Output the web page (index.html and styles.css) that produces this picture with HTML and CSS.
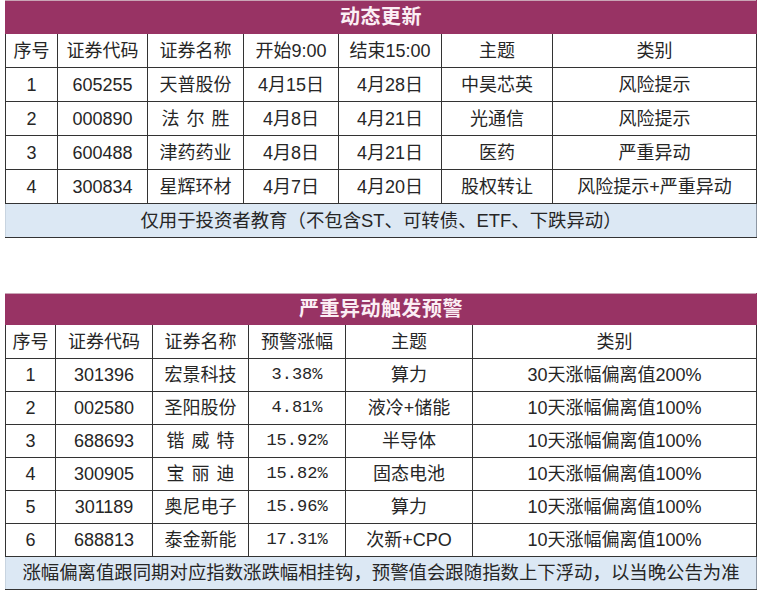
FILE: index.html
```html
<!DOCTYPE html>
<html lang="zh">
<head>
<meta charset="utf-8">
<link rel="stylesheet" href="styles.css">
</head>
<body>
<div class="page">
  <table class="grid t1">
    <colgroup>
      <col style="width:52px"><col style="width:90px"><col style="width:96px"><col style="width:95px"><col style="width:103px"><col style="width:111px"><col>
    </colgroup>
    <tr class="title"><th colspan="7">动态更新</th></tr>
    <tr class="head"><td>序号</td><td>证券代码</td><td>证券名称</td><td>开始9:00</td><td>结束15:00</td><td>主题</td><td>类别</td></tr>
    <tr><td>1</td><td>605255</td><td>天普股份</td><td>4月15日</td><td>4月28日</td><td>中昊芯英</td><td>风险提示</td></tr>
    <tr><td>2</td><td>000890</td><td class="sp">法 尔 胜</td><td>4月8日</td><td>4月21日</td><td>光通信</td><td>风险提示</td></tr>
    <tr><td>3</td><td>600488</td><td>津药药业</td><td>4月8日</td><td>4月21日</td><td>医药</td><td>严重异动</td></tr>
    <tr><td>4</td><td>300834</td><td>星辉环材</td><td>4月7日</td><td>4月20日</td><td>股权转让</td><td>风险提示+严重异动</td></tr>
    <tr class="foot"><td colspan="7">仅用于投资者教育（不包含ST、可转债、ETF、下跌异动）</td></tr>
  </table>

  <table class="grid t2">
    <colgroup>
      <col style="width:50px"><col style="width:97px"><col style="width:96px"><col style="width:97px"><col style="width:127px"><col>
    </colgroup>
    <tr class="title"><th colspan="6">严重异动触发预警</th></tr>
    <tr class="head"><td>序号</td><td>证券代码</td><td>证券名称</td><td>预警涨幅</td><td>主题</td><td>类别</td></tr>
    <tr><td>1</td><td>301396</td><td>宏景科技</td><td class="pct">3.38%</td><td>算力</td><td>30天涨幅偏离值200%</td></tr>
    <tr><td>2</td><td>002580</td><td>圣阳股份</td><td class="pct">4.81%</td><td>液冷+储能</td><td>10天涨幅偏离值100%</td></tr>
    <tr><td>3</td><td>688693</td><td class="sp">锴 威 特</td><td class="pct">15.92%</td><td>半导体</td><td>10天涨幅偏离值100%</td></tr>
    <tr><td>4</td><td>300905</td><td class="sp">宝 丽 迪</td><td class="pct">15.82%</td><td>固态电池</td><td>10天涨幅偏离值100%</td></tr>
    <tr><td>5</td><td>301189</td><td>奥尼电子</td><td class="pct">15.96%</td><td>算力</td><td>10天涨幅偏离值100%</td></tr>
    <tr><td>6</td><td>688813</td><td>泰金新能</td><td class="pct">17.31%</td><td>次新+CPO</td><td>10天涨幅偏离值100%</td></tr>
    <tr class="foot"><td colspan="6">涨幅偏离值跟同期对应指数涨跌幅相挂钩，预警值会跟随指数上下浮动，以当晚公告为准</td></tr>
  </table>
</div>
</body>
</html>
```

FILE: styles.css
```css
html, body {
  margin: 0;
  padding: 0;
  background: #ffffff;
}
.page {
  width: 760px;
  padding: 0 0 0 5px;
  box-sizing: border-box;
  font-family: "Liberation Sans", "Noto Sans CJK SC", sans-serif;
  color: #262626;
}
.grid {
  width: 752px;
  table-layout: fixed;
  border-collapse: collapse;
}
.grid td, .grid th {
  border: 1px solid #333333;
  padding: 0;
  text-align: center;
  font-size: 18px;
  line-height: 20px;
  white-space: nowrap;
  overflow: hidden;
}
.grid .title th {
  background: #983364;
  color: #fbeef4;
  font-weight: bold;
  font-size: 20px;
  letter-spacing: 0.5px;
  border-color: #983364;
  border-top: 1px solid #c9a6b6;
}
.t1 .title th { height: 32px; }
.t1 tr td { height: 33px; }
.grid .head td { font-size: 18px; }
.grid .foot td {
  background: #dce8f4;
  font-size: 18.4px;
  border-left-color: #c8d4e0;
  border-right-color: #8d97a3;
}
.grid td.sp { word-spacing: 2px; }
.grid td.pct { font-family: "Liberation Mono", "Noto Sans CJK SC", monospace; font-size: 17px; }
.t2 {
  margin-top: 55px;
}
.t2 .title th { height: 30px; }
.t2 tr td { height: 32px; }
.t2 .head td { height: 33px; }
```
